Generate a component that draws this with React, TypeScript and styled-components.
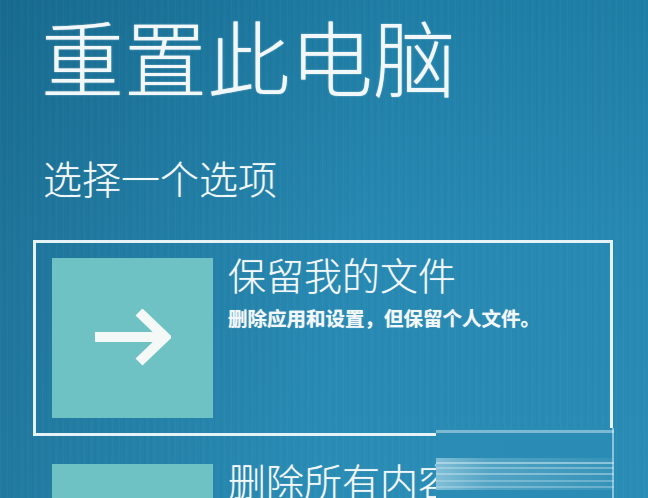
import React from "react";
import styled, { createGlobalStyle } from "styled-components";

const Global = createGlobalStyle`
  html, body { margin: 0; padding: 0; }
  body {
    width: 648px;
    height: 498px;
    overflow: hidden;
    font-family: "Noto Sans CJK SC", "Noto Sans", sans-serif;
  }
`;

const Screen = styled.div`
  position: relative;
  width: 648px;
  height: 498px;
  overflow: hidden;
  box-sizing: border-box;
  padding: 2px 0 0 33px;
  color: #f2f8fa;
  background:
    repeating-linear-gradient(90deg, rgba(255,255,255,0.025) 0 1px, rgba(0,0,0,0) 1px 4px, rgba(0,0,0,0.025) 4px 5px, rgba(0,0,0,0) 5px 7px),
    linear-gradient(100deg, rgba(10, 70, 100, 0.35) 0%, rgba(10, 70, 100, 0) 55%),
    linear-gradient(180deg, #1f7ea6 0%, #2889b2 50%, #2a8db6 100%);
`;

const Title = styled.h1`
  margin: 0 0 0 8px;
  font-size: 83px;
  font-weight: 300;
  line-height: 106px;
  letter-spacing: 0;
  text-shadow: 0 0 1.5px rgba(255, 255, 255, 0.7);
`;

const Subtitle = styled.h2`
  margin: 45px 0 0 10px;
  font-size: 39px;
  font-weight: 300;
  line-height: 48px;
  text-shadow: 0 0 1px rgba(255, 255, 255, 0.5);
`;

const Options = styled.div`
  display: flex;
  flex-direction: column;
  gap: 10px;
  margin-top: 39px;
`;

const Option = styled.div<{ $selected?: boolean }>`
  display: flex;
  gap: 15px;
  width: 580px;
  box-sizing: border-box;
  padding: 15px 16px;
  border: 3px solid ${(p) => (p.$selected ? "#e6f3f6" : "transparent")};
`;

const Tile = styled.div`
  flex: none;
  width: 161px;
  height: 160px;
  background: #6fc2c4;
  display: flex;
  align-items: center;
  justify-content: center;
`;

const Texts = styled.div`
  display: flex;
  flex-direction: column;
`;

const OptionTitle = styled.div`
  font-size: 38px;
  font-weight: 300;
  line-height: 40px;
  margin-top: -4px;
  text-shadow: 0 0 1px rgba(255, 255, 255, 0.5);
`;

const OptionDesc = styled.div`
  margin-top: 11px;
  font-size: 19.5px;
  font-weight: 700;
  line-height: 26px;
  letter-spacing: 0;
  text-shadow: 0 0 1px rgba(255, 255, 255, 0.6);
`;

const Smear = styled.div`
  position: absolute;
  left: 436px;
  top: 428px;
  width: 176px;
  height: 70px;
  border-right: 2px solid rgba(220, 240, 246, 0.55);
  background:
    linear-gradient(180deg,
      rgba(0,0,0,0) 0 2px,
      rgba(225,242,247,0.45) 2px 5px,
      rgba(0,0,0,0) 5px 34px,
      rgba(225,242,247,0.5) 34px 36px,
      rgba(0,0,0,0) 36px 39px,
      rgba(225,242,247,0.35) 39px 41px,
      rgba(0,0,0,0) 41px 45px,
      rgba(225,242,247,0.4) 45px 47px,
      rgba(0,0,0,0) 47px 52px,
      rgba(225,242,247,0.3) 52px 54px,
      rgba(0,0,0,0) 54px 58px,
      rgba(225,242,247,0.3) 58px 60px,
      rgba(0,0,0,0) 60px 100%),
    linear-gradient(90deg, #2b8db5 0%, #2a8cb4 100%);
  &::after {
    content: "";
    position: absolute;
    inset: 30px 0 8px 0;
    background: linear-gradient(90deg, rgba(200,232,242,0.55) 0%, rgba(200,232,242,0.25) 30%, rgba(200,232,242,0.08) 100%);
  }
`;

const Arrow = () => (
  <svg width="76" height="58" viewBox="0 0 76 58" fill="none">
    <path d="M0 28 H70" stroke="#f4f8f6" strokeWidth="10" />
    <path d="M44 3 L70 28 L44 53" stroke="#f4f8f6" strokeWidth="10" strokeLinejoin="miter" />
  </svg>
);

export default function App() {
  return (
    <>
      <Global />
      <Screen>
        <Title>重置此电脑</Title>
        <Subtitle>选择一个选项</Subtitle>
        <Options>
          <Option $selected>
            <Tile>
              <Arrow />
            </Tile>
            <Texts>
              <OptionTitle>保留我的文件</OptionTitle>
              <OptionDesc>删除应用和设置，但保留个人文件。</OptionDesc>
            </Texts>
          </Option>
          <Option>
            <Tile />
            <Texts>
              <OptionTitle>删除所有内容</OptionTitle>
            </Texts>
          </Option>
        </Options>
        <Smear />
      </Screen>
    </>
  );
}
